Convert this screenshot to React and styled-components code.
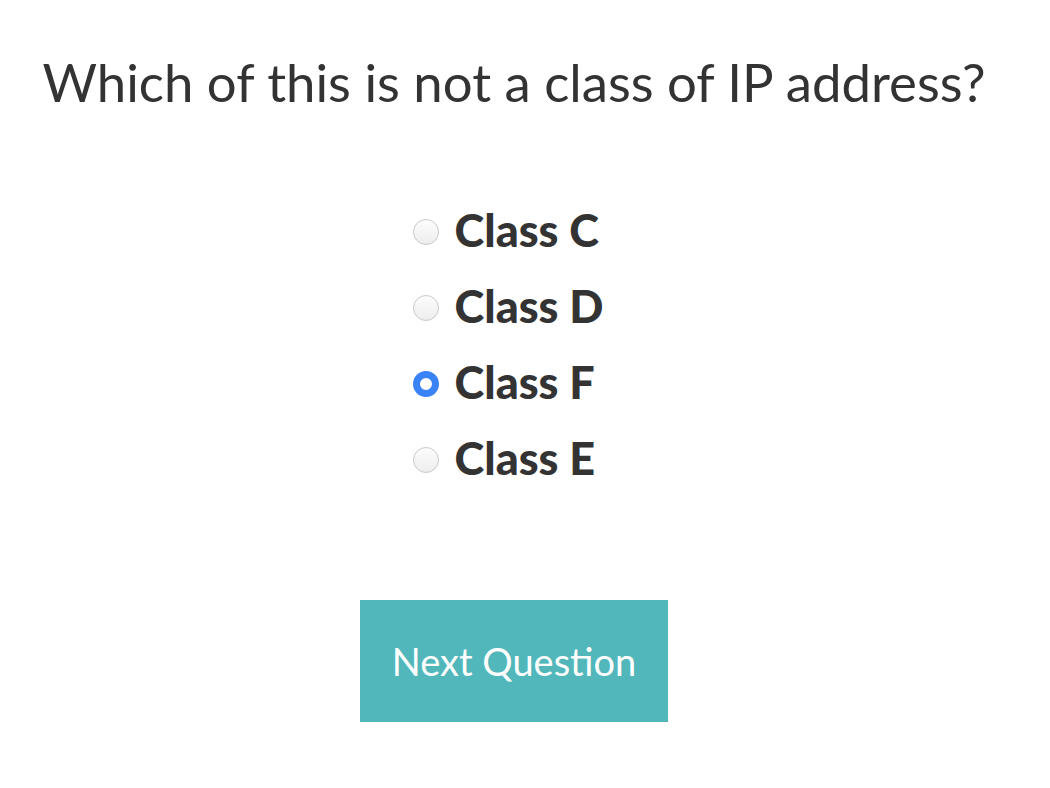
import React, { useState } from 'react';
import styled, { createGlobalStyle } from 'styled-components';

const GlobalStyle = createGlobalStyle`
  html, body {
    margin: 0;
    padding: 0;
    background: #fff;
  }
  body {
    font-family: Lato, "Noto Sans", sans-serif;
    color: #333;
  }
`;

const Page = styled.main`
  display: flex;
  flex-direction: column;
  align-items: center;
  width: 1028px;
  padding-top: 46px;
`;

const Question = styled.h1`
  margin: 0;
  font-family: Lato, sans-serif;
  font-weight: 400;
  font-size: 52.7px;
  line-height: 72px;
  color: #333;
  text-align: center;
`;

const Options = styled.form`
  display: flex;
  flex-direction: column;
  gap: 24px;
  margin-top: 86px;
  margin-right: 12px;
`;

const Option = styled.label`
  display: flex;
  align-items: center;
  gap: 16px;
  height: 52px;
  font-family: Lato, sans-serif;
  font-weight: 900;
  font-size: 45px;
  color: #333;
  cursor: pointer;
`;

const Radio = styled.input`
  appearance: none;
  margin: 4px 0 0 0;
  width: 26px;
  height: 26px;
  border-radius: 50%;
  border: 1px solid #c9c9c9;
  background: linear-gradient(#fdfdfd, #ededed);
  box-sizing: border-box;
  flex-shrink: 0;

  &:checked {
    border: 7px solid #3a82f7;
    background: #fff;
  }
`;

const NextButton = styled.button`
  margin-top: 116px;
  width: 308px;
  height: 122px;
  border: none;
  background: #52b7ba;
  color: #fff;
  font-family: Lato, sans-serif;
  font-weight: 400;
  font-size: 38px;
  cursor: pointer;
`;

const choices = ['Class C', 'Class D', 'Class F', 'Class E'];

const App = () => {
  const [picked, setPicked] = useState('Class F');
  return (
    <React.Fragment>
      <GlobalStyle />
      <Page>
        <Question>Which of this is not a class of IP address?</Question>
        <Options>
          {choices.map((c) => (
            <Option key={c}>
              <Radio
                type="radio"
                name="answer"
                checked={picked === c}
                onChange={() => setPicked(c)}
              />
              {c}
            </Option>
          ))}
        </Options>
        <NextButton type="button">Next Question</NextButton>
      </Page>
    </React.Fragment>
  );
};

export default App;
